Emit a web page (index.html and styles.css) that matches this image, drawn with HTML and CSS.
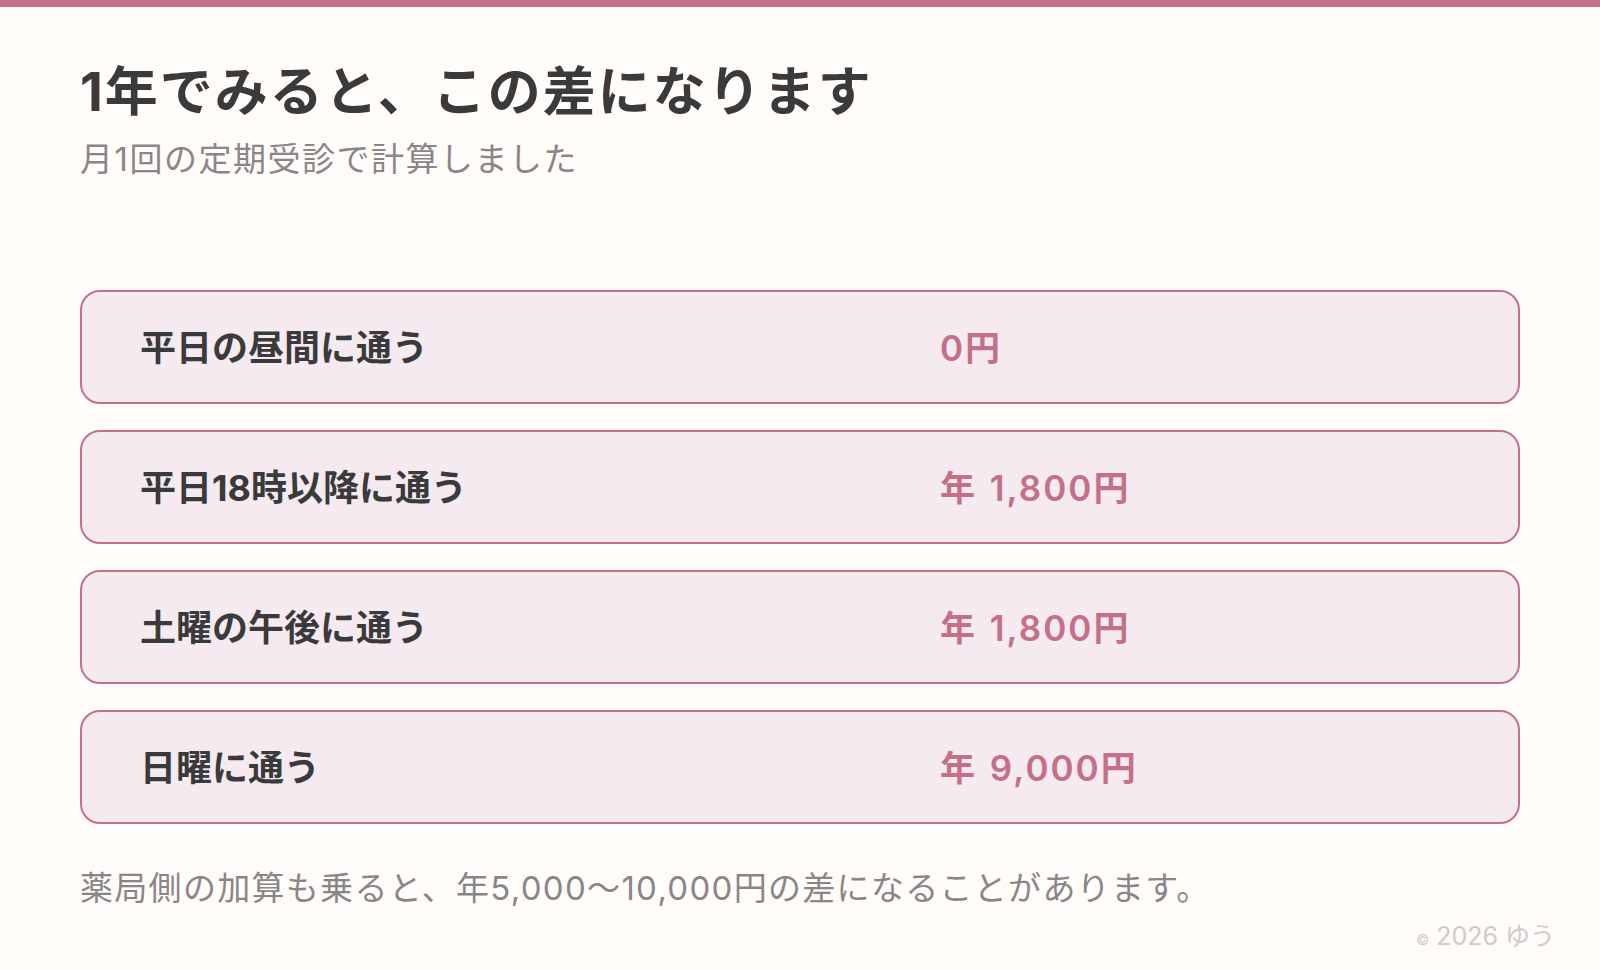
FILE: index.html
```html
<!DOCTYPE html>
<html lang="ja">
<head>
    <meta charset="UTF-8">
    <meta name="viewport" content="width=device-width, initial-scale=1.0">
    <title>1年でみると</title>
<link rel="stylesheet" href="styles.css">
</head>
<body>
    <div id="topbar"></div>
    <div id="wrapper">
        <h1 class="title">1年でみると、この差になります</h1>
        <p class="sub">月1回の定期受診で計算しました</p>

        <div class="list">
            <div class="row">
                <span class="label">平日の昼間に通う</span>
                <span class="value">0円</span>
            </div>
            <div class="row">
                <span class="label">平日18時以降に通う</span>
                <span class="value">年 1,800円</span>
            </div>
            <div class="row">
                <span class="label">土曜の午後に通う</span>
                <span class="value">年 1,800円</span>
            </div>
            <div class="row">
                <span class="label">日曜に通う</span>
                <span class="value">年 9,000円</span>
            </div>
        </div>

        <p class="note">薬局側の加算も乗ると、年5,000〜10,000円の差になることがあります。</p>
    </div>
    <div class="copy"><span class="mark">©</span> 2026 ゆう</div>
</body>
</html>
```

FILE: styles.css
```css
html, body{
    margin: 0;
    padding: 0;
}
body{
    background-color: #fffcfa;
    font-family: Inter, "Noto Sans CJK JP", sans-serif;
    color: #3a3a3a;
    width: 1600px;
    height: 970px;
    overflow: hidden;
    position: relative;
}
#topbar{
    height: 7px;
    background-color: #c47089;
}
#wrapper{
    padding: 0 80px;
}
.title{
    margin: 47px 0 0 0;
    font-size: 53px;
    font-weight: bold;
    line-height: 76px;
    letter-spacing: 2px;
}
.sub{
    margin: 7px 0 0 0;
    font-size: 33px;
    line-height: 44px;
    letter-spacing: 1.5px;
    color: #8a8688;
}
.list{
    margin-top: 109px;
    display: flex;
    flex-direction: column;
    gap: 26px;
}
.row{
    display: flex;
    align-items: center;
    height: 106px;
    padding: 0 58px 4px 58px;
    background-color: #f5eaf0;
    border: 2px solid #c47089;
    border-radius: 20px;
}
.label{
    width: 800px;
    font-size: 36px;
    font-weight: bold;
    color: #3a3a3a;
}
.value{
    font-size: 35px;
    font-weight: 600;
    color: #c47089;
    letter-spacing: 2px;
    word-spacing: 2px;
}
.note{
    margin: 42px 0 0 0;
    font-size: 33px;
    line-height: 44px;
    letter-spacing: 1.3px;
    color: #8a8688;
}
.copy{
    position: absolute;
    right: 45px;
    bottom: 18px;
    font-size: 25px;
    color: #cfcbcc;
}
.mark{
    font-size: 14px;
}
```
